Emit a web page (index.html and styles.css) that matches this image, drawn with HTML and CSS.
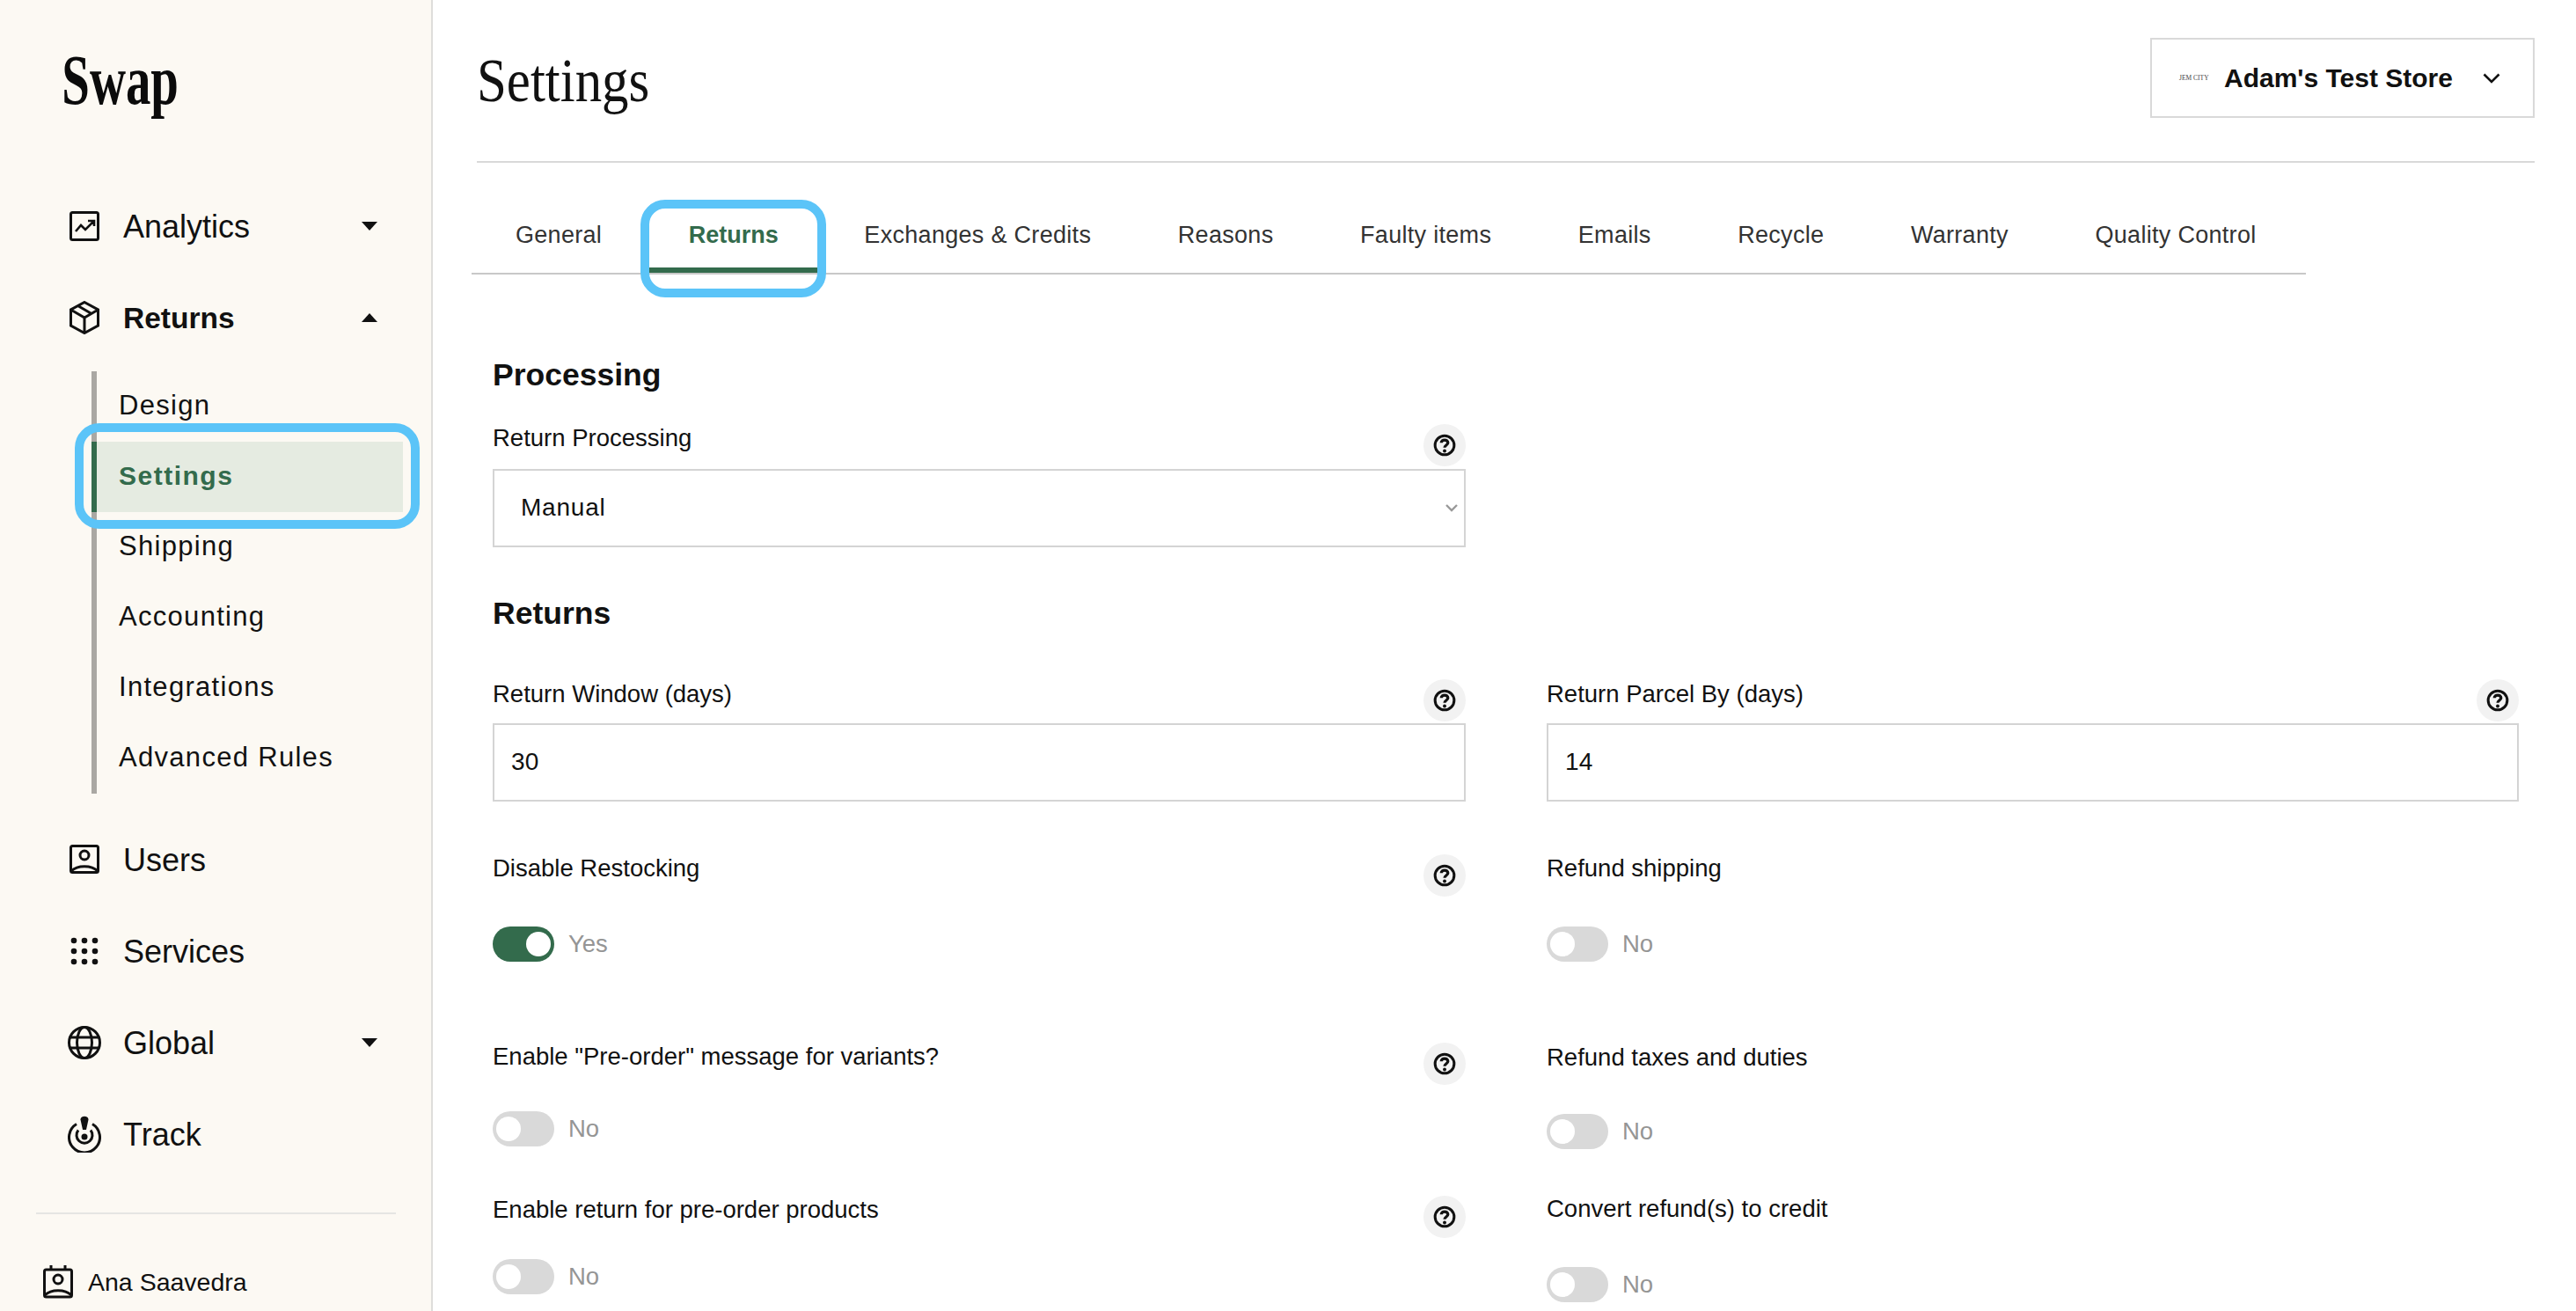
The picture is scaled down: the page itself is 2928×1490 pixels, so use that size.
FILE: index.html
```html
<!DOCTYPE html>
<html lang="en">
<head>
    <meta charset="UTF-8">
    <title>Settings</title>
    <link rel="stylesheet" href="styles.css">
</head>
<body>
    <aside class="sidebar">
        <div class="logo">Swap</div>

        <nav class="nav">
            <a class="nav-row">
                <svg class="nav-icon" width="38" height="38" viewBox="-2 -2 38 38" fill="none" stroke="#111" stroke-width="3"><rect x="1.5" y="1.5" width="31" height="31" rx="2"/><path d="M7 23L13 16L18 21L28 11M21 11H28V17" stroke-width="2.6"/></svg>
                <span>Analytics</span>
                <svg class="caret" width="18" height="10" viewBox="0 0 18 10"><polygon points="0,0 18,0 9,10" fill="#111"/></svg>
            </a>
            <a class="nav-row nav-open">
                <svg class="nav-icon" width="38" height="38" viewBox="-2 0 38 38" fill="none" stroke="#111" stroke-width="3"><path d="M17 1.5L32.5 10V28L17 36.5L1.5 28V10ZM1.5 10L17 19L32.5 10M17 19V36.5M9.500 5.500L25 14.500"/></svg>
                <span>Returns</span>
                <svg class="caret" width="18" height="10" viewBox="0 0 18 10"><polygon points="0,10 18,10 9,0" fill="#111"/></svg>
            </a>

            <div class="sub-list">
                <a class="sub-item">Design</a>
                <a class="sub-item active">Settings<span class="highlight"></span></a>
                <a class="sub-item">Shipping</a>
                <a class="sub-item">Accounting</a>
                <a class="sub-item">Integrations</a>
                <a class="sub-item">Advanced Rules</a>
            </div>

            <a class="nav-row nav-after-list">
                <svg class="nav-icon" width="38" height="38" viewBox="-2 -2 38 38" fill="none" stroke="#111" stroke-width="3"><rect x="1.500" y="1.500" width="31" height="30" rx="2"/><circle cx="17" cy="12" r="5"/><path d="M2 30C9 23 25 23 32 30"/></svg>
                <span>Users</span>
            </a>
            <a class="nav-row">
                <svg class="nav-icon" width="38" height="38" viewBox="0 0 38 38" fill="#111"><circle cx="7" cy="7" r="3.300"/><circle cx="19" cy="7" r="3.300"/><circle cx="31" cy="7" r="3.300"/><circle cx="7" cy="19" r="3.300"/><circle cx="19" cy="19" r="3.300"/><circle cx="31" cy="19" r="3.300"/><circle cx="7" cy="31" r="3.300"/><circle cx="19" cy="31" r="3.300"/><circle cx="31" cy="31" r="3.300"/></svg>
                <span>Services</span>
            </a>
            <a class="nav-row">
                <svg class="nav-icon" width="38" height="38" viewBox="0 0 38 38" fill="none" stroke="#111" stroke-width="3"><circle cx="19" cy="19" r="17.500"/><ellipse cx="19" cy="19" rx="8.500" ry="17.500"/><path d="M3 13H35M3 25H35"/></svg>
                <span>Global</span>
                <svg class="caret" width="18" height="10" viewBox="0 0 18 10"><polygon points="0,0 18,0 9,10" fill="#111"/></svg>
            </a>
            <a class="nav-row">
                <svg class="nav-icon" width="38" height="42" viewBox="0 0 38 42" fill="none" stroke="#111" stroke-width="3"><path d="M10 9.500A17.500 17.500 0 1 0 28 9.500"/><path d="M12 16.500A9 9 0 1 0 26 16.500"/><circle cx="19" cy="24" r="3.500" fill="#111" stroke="none"/><path d="M14.500 4.500C14.500 -0.500 23.500 -0.500 23.500 4.500L21 16H17Z" fill="#111" stroke="none"/></svg>
                <span>Track</span>
            </a>
        </nav>

        <div class="sidebar-foot">
            <div class="user-row">
                <svg width="36" height="38" viewBox="0 0 36 38" fill="none" stroke="#111" stroke-width="3"><rect x="2.500" y="5" width="31" height="31" rx="2"/><circle cx="18" cy="16" r="5"/><path d="M3 34C10 27 26 27 33 34"/><path d="M10 0V5M26 0V5"/></svg>
                <span>Ana Saavedra</span>
            </div>
        </div>
    </aside>

    <main class="main">
        <header class="page-header">
            <h1 class="page-title">Settings</h1>
            <div class="store-picker">
                <span class="store-logo">JEM CITY</span>
                <span class="store-name">Adam's Test Store</span>
                <svg class="store-chevron" width="20" height="12" viewBox="0 0 20 12" fill="none" stroke="#111" stroke-width="2.600"><path d="M1.500 1.500L10 10L18.500 1.500"/></svg>
            </div>
        </header>

        <div class="tabs">
            <a class="tab">General</a>
            <a class="tab active">Returns<span class="highlight"></span></a>
            <a class="tab">Exchanges &amp; Credits</a>
            <a class="tab">Reasons</a>
            <a class="tab">Faulty items</a>
            <a class="tab">Emails</a>
            <a class="tab">Recycle</a>
            <a class="tab">Warranty</a>
            <a class="tab">Quality Control</a>
        </div>

        <section class="content">
            <h2 class="heading-first">Processing</h2>
            <div class="half">
                <div class="field-head head-tall">
                    <label>Return Processing</label>
                    <span class="help"><svg width="26" height="26" viewBox="0 0 24 24" fill="none" stroke="#111" stroke-width="2.800"><circle cx="12" cy="12" r="10"/><path d="M8.500 9.500C8.500 5.500 15.500 5.500 15.500 9.500C15.500 12 12 12 12 14.500" stroke-width="3"/><circle cx="12" cy="18" r="1.800" fill="#111" stroke="none"/></svg></span>
                </div>
                <div class="select-wrap">
                    <select><option>Manual</option></select>
                    <svg class="select-arrow" width="14" height="9" viewBox="0 0 14 9" fill="none" stroke="#999" stroke-width="2.400"><path d="M1 1L7 7L13 1"/></svg>
                </div>
            </div>

            <h2 class="heading-second">Returns</h2>
            <div class="form-grid">
                <div class="form-col">
                    <div class="field">
                        <div class="field-head head-up">
                            <label>Return Window (days)</label>
                            <span class="help"><svg width="26" height="26" viewBox="0 0 24 24" fill="none" stroke="#111" stroke-width="2.800"><circle cx="12" cy="12" r="10"/><path d="M8.500 9.500C8.500 5.500 15.500 5.500 15.500 9.500C15.500 12 12 12 12 14.500" stroke-width="3"/><circle cx="12" cy="18" r="1.800" fill="#111" stroke="none"/></svg></span>
                        </div>
                        <input type="text" value="30">
                    </div>
                    <div class="field after-input">
                        <div class="field-head">
                            <label>Disable Restocking</label>
                            <span class="help"><svg width="26" height="26" viewBox="0 0 24 24" fill="none" stroke="#111" stroke-width="2.800"><circle cx="12" cy="12" r="10"/><path d="M8.500 9.500C8.500 5.500 15.500 5.500 15.500 9.500C15.500 12 12 12 12 14.500" stroke-width="3"/><circle cx="12" cy="18" r="1.800" fill="#111" stroke="none"/></svg></span>
                        </div>
                        <div class="toggle-row gap-34"><span class="toggle on"></span><span>Yes</span></div>
                    </div>
                    <div class="field space-90">
                        <div class="field-head">
                            <label>Enable "Pre-order" message for variants?</label>
                            <span class="help"><svg width="26" height="26" viewBox="0 0 24 24" fill="none" stroke="#111" stroke-width="2.800"><circle cx="12" cy="12" r="10"/><path d="M8.500 9.500C8.500 5.500 15.500 5.500 15.500 9.500C15.500 12 12 12 12 14.500" stroke-width="3"/><circle cx="12" cy="18" r="1.800" fill="#111" stroke="none"/></svg></span>
                        </div>
                        <div class="toggle-row gap-30"><span class="toggle"></span><span>No</span></div>
                    </div>
                    <div class="field space-54">
                        <div class="field-head">
                            <label>Enable return for pre-order products</label>
                            <span class="help"><svg width="26" height="26" viewBox="0 0 24 24" fill="none" stroke="#111" stroke-width="2.800"><circle cx="12" cy="12" r="10"/><path d="M8.500 9.500C8.500 5.500 15.500 5.500 15.500 9.500C15.500 12 12 12 12 14.500" stroke-width="3"/><circle cx="12" cy="18" r="1.800" fill="#111" stroke="none"/></svg></span>
                        </div>
                        <div class="toggle-row gap-24"><span class="toggle"></span><span>No</span></div>
                    </div>
                </div>

                <div class="form-col">
                    <div class="field">
                        <div class="field-head head-up">
                            <label>Return Parcel By (days)</label>
                            <span class="help"><svg width="26" height="26" viewBox="0 0 24 24" fill="none" stroke="#111" stroke-width="2.800"><circle cx="12" cy="12" r="10"/><path d="M8.500 9.500C8.500 5.500 15.500 5.500 15.500 9.500C15.500 12 12 12 12 14.500" stroke-width="3"/><circle cx="12" cy="18" r="1.800" fill="#111" stroke="none"/></svg></span>
                        </div>
                        <input type="text" value="14">
                    </div>
                    <div class="field after-input">
                        <div class="field-head">
                            <label>Refund shipping</label>
                        </div>
                        <div class="toggle-row gap-34"><span class="toggle"></span><span>No</span></div>
                    </div>
                    <div class="field space-91">
                        <div class="field-head">
                            <label>Refund taxes and duties</label>
                        </div>
                        <div class="toggle-row gap-32"><span class="toggle"></span><span>No</span></div>
                    </div>
                    <div class="field space-50">
                        <div class="field-head">
                            <label>Convert refund(s) to credit</label>
                        </div>
                        <div class="toggle-row gap-34"><span class="toggle"></span><span>No</span></div>
                    </div>
                </div>
            </div>
        </section>
    </main>
</body>
</html>
```

FILE: styles.css
```css
* {
    box-sizing: border-box;
}

html, body {
    height: 100%;
}

body {
    margin: 0;
    display: flex;
    overflow: hidden;
    background-color: #fff;
    color: #111;
    font-family: "Liberation Sans", Arial, sans-serif;
}

/* sidebar */
.sidebar {
    width: 492px;
    flex-shrink: 0;
    background-color: #fcf9f3;
    border-right: 2px solid #dedddb;
}

.logo {
    height: 204px;
    padding: 43px 0 0 99px;
    font-family: "Liberation Serif", serif;
    font-size: 80px;
    font-weight: bold;
    line-height: 96px;
    color: #0b0b0b;
    transform: scaleX(0.71);
    transform-origin: left top;
}

.nav {
    padding-top: 1px;
}

.nav-row {
    display: flex;
    align-items: center;
    height: 104px;
    padding: 0 61px 0 77px;
    font-size: 36px;
}

.nav-row span {
    padding-top: 1px;
}

.nav-icon {
    flex-shrink: 0;
    margin-right: 25px;
}

.caret {
    margin-left: auto;
}

.nav-open {
    font-size: 33.500px;
    font-weight: bold;
}

.nav-after-list {
    margin-top: 23px;
}

.sub-list {
    width: 354px;
    margin: 9px 0 0 104px;
    border-left: 6px solid #aaa8a3;
}

.sub-item {
    position: relative;
    display: flex;
    align-items: center;
    height: 80px;
    padding: 0 0 3px 25px;
    font-size: 31px;
    letter-spacing: 1.300px;
}

.sub-item.active {
    margin-left: -6px;
    border-left: 6px solid #336b4c;
    background-color: #e5ebe1;
    color: #336b4c;
    font-size: 30px;
    font-weight: bold;
    letter-spacing: 1.500px;
}

.highlight {
    position: absolute;
    border: 10px solid #5bc4f8;
    border-radius: 28px;
}

.sub-item .highlight {
    top: -21px;
    bottom: -19px;
    left: -25px;
    right: -19px;
}

.sidebar-foot {
    margin: 37px 40px 0 41px;
    padding-top: 58px;
    border-top: 2px solid #e5e5e3;
}

.user-row {
    display: flex;
    align-items: center;
    gap: 16px;
    padding-left: 7px;
    font-size: 28.500px;
}

/* header */
.main {
    flex: 1;
    min-width: 0;
    padding: 0 47px 0 50px;
}

.page-header {
    display: flex;
    align-items: flex-start;
    justify-content: space-between;
    height: 185px;
    border-bottom: 2px solid #d9d9d9;
}

.page-title {
    margin: 52px 0 0;
    font-family: "Liberation Serif", serif;
    font-size: 70px;
    font-weight: normal;
    line-height: 80px;
    color: #111;
    transform: scaleX(0.87);
    transform-origin: left top;
}

.store-picker {
    display: flex;
    align-items: center;
    width: 437px;
    height: 91px;
    margin-top: 43px;
    padding: 0 37px 0 31px;
    border: 2px solid #d9d9d9;
}

.store-logo {
    width: 34px;
    margin-right: 17px;
    font-family: "Liberation Serif", serif;
    font-size: 7.500px;
    white-space: nowrap;
    color: #444;
}

.store-name {
    font-size: 30px;
    font-weight: bold;
}

.store-chevron {
    margin-left: auto;
}

/* tabs */
.tabs {
    display: flex;
    gap: 8.600px;
    width: 2085px;
    margin-left: -6px;
    padding-left: 5px;
    border-bottom: 2px solid #c8c8c8;
}

.tab {
    position: relative;
    height: 125px;
    padding: 65px 45px 0;
    border-bottom: 6px solid transparent;
    font-size: 27px;
    line-height: 34px;
    letter-spacing: 0.300px;
    color: #333;
}

.tab.active {
    border-bottom-color: #336b4c;
    color: #336b4c;
    font-weight: bold;
    letter-spacing: 0;
    padding-right: 44px;
}

.tab .highlight {
    top: 42px;
    bottom: -34px;
    left: -10px;
    right: -10px;
}

/* form */
.content {
    padding-left: 18px;
}

h2 {
    margin: 0;
    font-size: 35.500px;
    font-weight: bold;
    line-height: 46px;
    color: #111;
}

.heading-first {
    margin-top: 91px;
    margin-bottom: 31px;
}

.heading-second {
    margin-top: 52px;
    margin-bottom: 52px;
}

.half {
    width: 1106px;
}

.form-grid {
    display: grid;
    grid-template-columns: 1106px 1105px;
    column-gap: 92px;
}

.form-col {
    display: flex;
    flex-direction: column;
}

.field-head {
    display: flex;
    align-items: flex-start;
    justify-content: space-between;
    height: 50px;
}

.head-tall {
    height: 53px;
}

label {
    padding-top: 1px;
    font-size: 27.500px;
    line-height: 34px;
    color: #111;
}

.help {
    display: flex;
    align-items: center;
    justify-content: center;
    width: 48px;
    height: 48px;
    margin-top: 2px;
    border-radius: 50%;
    background-color: #f2f2f2;
}

.head-up label {
    padding-top: 0;
}

.head-up .help {
    margin-top: 0;
}

input, select {
    display: block;
    width: 100%;
    height: 89px;
    border: 2px solid #d4d4d4;
    border-radius: 0;
    outline: none;
    background-color: #fff;
    font-family: inherit;
    font-size: 28px;
    letter-spacing: 0.800px;
    color: #111;
}

input {
    padding: 0 19px 2px;
    letter-spacing: 0.300px;
}

select {
    appearance: none;
    padding: 0 30px 2px;
}

.select-wrap {
    position: relative;
}

.select-arrow {
    position: absolute;
    top: 40px;
    right: 9px;
}

.after-input {
    margin-top: 58px;
}

.space-90 {
    margin-top: 90px;
}

.space-91 {
    margin-top: 91px;
}

.space-54 {
    margin-top: 54px;
}

.space-50 {
    margin-top: 50px;
}

.toggle-row {
    display: flex;
    align-items: center;
    gap: 16px;
    font-size: 27.500px;
    color: #959595;
}

.gap-24 {
    margin-top: 24px;
}

.gap-30 {
    margin-top: 30px;
}

.gap-32 {
    margin-top: 32px;
}

.gap-34 {
    margin-top: 34px;
}

.toggle {
    position: relative;
    display: block;
    width: 70px;
    height: 40px;
    border-radius: 20px;
    background-color: #d9d9d9;
}

.toggle::after {
    content: "";
    position: absolute;
    top: 6px;
    left: 4px;
    width: 28px;
    height: 28px;
    border-radius: 50%;
    background-color: #fff;
}

.toggle.on {
    background-color: #336b4c;
}

.toggle.on::after {
    left: auto;
    right: 4px;
}
```
